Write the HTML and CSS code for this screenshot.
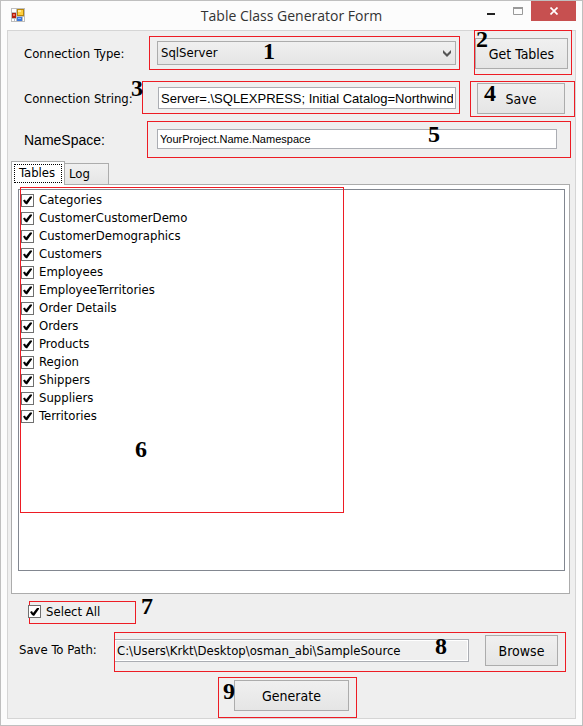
FILE: index.html
```html
<!DOCTYPE html>
<html lang="en">
<head>
<meta charset="utf-8">
<title>Table Class Generator Form</title>
<link rel="stylesheet" href="styles.css">
</head>
<body>
<div class="window">
  <header class="titlebar">
    <svg class="app-icon" width="14" height="14" viewBox="0 0 14 14" aria-hidden="true">
      <rect width="14" height="14" fill="#bdbdbd"/>
      <rect x="1" y="1" width="4" height="3" fill="#fff"/>
      <rect x="1" y="5" width="4" height="5" fill="#b3200f"/>
      <rect x="2" y="6" width="2" height="2" fill="#f0705c"/>
      <rect x="6" y="1" width="7" height="7" fill="#b8860b"/>
      <rect x="7" y="2" width="5" height="5" fill="#ffcf3f"/>
      <rect x="7" y="2" width="3" height="2" fill="#ffe99a"/>
      <rect x="6" y="9" width="5" height="4" fill="#3c78dc"/>
      <rect x="7" y="10" width="3" height="1" fill="#8db8ff"/>
      <rect x="1" y="11" width="2" height="2" fill="#fff"/>
      <rect x="4" y="11" width="1" height="2" fill="#fff"/>
      <rect x="12" y="9" width="1" height="4" fill="#fff"/>
    </svg>
    <h1 class="title">Table Class Generator Form</h1>
    <div class="window-buttons">
      <button class="caption" type="button" aria-label="Minimize">
        <svg width="8" height="10" viewBox="0 0 8 10"><rect y="7" width="8" height="2" fill="#222"/></svg>
      </button>
      <button class="caption" type="button" aria-label="Maximize">
        <svg width="10" height="8" viewBox="0 0 10 8"><path d="M0.5 1V7.5H9.5V1" fill="none" stroke="#999"/><rect width="10" height="2" fill="#999"/></svg>
      </button>
      <button class="caption close" type="button" aria-label="Close">
        <svg width="8" height="8" viewBox="0 0 8 8"><path d="M0.5 0.5L7.5 7.5M7.5 0.5L0.5 7.5" stroke="#fff" stroke-width="1.7"/></svg>
      </button>
    </div>
  </header>

  <main class="client">
    <div class="row row-type">
      <label for="type">Connection Type:</label>
      <div class="mark mark-type">
        <select id="type" class="select"><option>SqlServer</option></select>
        <svg class="chevron" width="8" height="7" viewBox="0 0 8 7" aria-hidden="true"><path d="M0 0L4 4L8 0V3L4 7L0 3Z" fill="#555"/></svg>
        <span class="num num-1">1</span>
      </div>
      <div class="mark mark-get">
        <button class="btn" type="button">Get Tables</button>
        <span class="num num-2">2</span>
      </div>
    </div>

    <div class="row row-string">
      <label for="conn">Connection String:</label>
      <div class="mark mark-string">
        <input id="conn" class="text text-large" type="text" value="Server=.\SQLEXPRESS; Initial Catalog=Northwind">
        <span class="num num-3">3</span>
      </div>
      <div class="mark mark-save">
        <button class="btn" type="button">Save</button>
        <span class="num num-4">4</span>
      </div>
    </div>

    <div class="row row-namespace">
      <label class="label-arial" for="ns">NameSpace:</label>
      <div class="mark mark-namespace">
        <input id="ns" class="text" type="text" value="YourProject.Name.Namespace">
        <span class="num num-5">5</span>
      </div>
    </div>

    <section class="tabs">
      <div class="tablist" role="tablist">
        <button class="tab active" type="button" role="tab" aria-selected="true">Tables</button>
        <button class="tab" type="button" role="tab" aria-selected="false">Log</button>
      </div>
      <div class="panel" role="tabpanel">
        <div class="list">
          <label class="item"><input class="check" type="checkbox" checked>Categories</label>
          <label class="item"><input class="check" type="checkbox" checked>CustomerCustomerDemo</label>
          <label class="item"><input class="check" type="checkbox" checked>CustomerDemographics</label>
          <label class="item"><input class="check" type="checkbox" checked>Customers</label>
          <label class="item"><input class="check" type="checkbox" checked>Employees</label>
          <label class="item"><input class="check" type="checkbox" checked>EmployeeTerritories</label>
          <label class="item"><input class="check" type="checkbox" checked>Order Details</label>
          <label class="item"><input class="check" type="checkbox" checked>Orders</label>
          <label class="item"><input class="check" type="checkbox" checked>Products</label>
          <label class="item"><input class="check" type="checkbox" checked>Region</label>
          <label class="item"><input class="check" type="checkbox" checked>Shippers</label>
          <label class="item"><input class="check" type="checkbox" checked>Suppliers</label>
          <label class="item"><input class="check" type="checkbox" checked>Territories</label>
          <div class="list-mark"><span class="num num-6">6</span></div>
        </div>
      </div>
    </section>

    <div class="mark mark-all">
      <label class="select-all"><input class="check" type="checkbox" checked>Select All</label>
      <span class="num num-7">7</span>
    </div>

    <div class="row row-path">
      <label for="path">Save To Path:</label>
      <div class="mark mark-path">
        <input id="path" class="text path" type="text" readonly value="C:\Users\Krkt\Desktop\osman_abi\SampleSource">
        <button class="btn btn-browse" type="button">Browse</button>
        <span class="num num-8">8</span>
      </div>
    </div>

    <div class="mark mark-generate">
      <button class="btn" type="button">Generate</button>
      <span class="num num-9">9</span>
    </div>
  </main>
</div>
</body>
</html>
```
FILE: styles.css
```css
* { box-sizing: border-box; }

body {
  margin: 0;
  color: #000;
  font: 13px/18px "DejaVu Sans Condensed", "DejaVu Sans", sans-serif;
}

button, input, select { margin: 0; color: inherit; font: inherit; }

.window {
  min-height: 100vh;
  padding: 0 6px 6px;
  border: 1px solid #bfbfbf;
  background: #fcfcfc;
}

/* Title bar */
.titlebar {
  display: grid;
  grid-template-columns: 1fr auto 1fr;
  align-items: start;
  height: 29px;
}
.app-icon { margin: 7px 0 0 4px; }
.title {
  margin: 4px 0 0;
  color: #333;
  font: 14px/22px "Open Sans", sans-serif;
}
.window-buttons { display: flex; justify-content: flex-end; }
.caption {
  display: flex;
  align-items: center;
  justify-content: center;
  width: 27px;
  height: 20px;
  padding: 0;
  border: 0;
  background: none;
}
.close { width: 45px; background: #c75050; }

/* Form area */
.client {
  border: 1px solid #d5d5d5;
  background: #efefef;
}
.row { display: grid; align-items: start; }
.row > label { padding-left: 16px; }

.mark { position: relative; border: 1px solid #ed1c24; }

.num {
  position: absolute;
  font: bold 24px/24px "Liberation Serif", serif;
  pointer-events: none;
}

.btn {
  width: 100%;
  height: 31px;
  padding: 0;
  border: 1px solid #acacac;
  background: linear-gradient(#f0f0f0, #e5e5e5);
  font-size: 14px;
}

.select, .text {
  display: block;
  width: 100%;
  border: 1px solid #abadb3;
  border-radius: 0;
  background: #fff;
}
.select {
  height: 24px;
  padding: 0 3px;
  border-color: #acacac;
  background: linear-gradient(#f0f0f0, #e5e5e5);
  appearance: none;
}
.chevron { position: absolute; right: 8px; top: 13px; }
.text {
  height: 20px;
  padding: 0 2px;
  font: 11px/18px "Liberation Sans", sans-serif;
}
.text-large { height: 22px; font-size: 13px; }

.row-type {
  grid-template-columns: 141px 1fr 98px;
  margin-top: -1px;
  padding-right: 3px;
}
.row-type > label { padding-top: 15px; }
.mark-type { margin: 6px 14px 0 0; padding: 4px 3px 4px 7px; }
.mark-get { padding: 7px 3px 5px 0; }

.row-string { grid-template-columns: 134px 1fr 105px; margin-top: 6px; }
.row-string > label { padding-top: 9px; }
.mark-string { margin-right: 10px; padding: 5px 3px 4px 15px; }
.mark-save { padding: 1px 9px 2px 6px; }

.row-namespace {
  grid-template-columns: 139px 1fr;
  margin-top: 4px;
  padding-right: 4px;
}
.row-namespace > label { padding-top: 10px; }
.label-arial { font: 14px/18px "Liberation Sans", sans-serif; }
.mark-namespace { padding: 7px 13px 8px 9px; }

/* Tabs */
.tabs { margin: 3px 5px 0 3px; }
.tablist { display: flex; align-items: flex-end; }
.tab {
  width: 44px;
  height: 21px;
  padding: 0 4px;
  border: 1px solid #acacac;
  border-width: 1px 1px 0 0;
  background: linear-gradient(#f0f0f0, #e5e5e5);
  text-align: left;
}
.tab.active {
  position: relative;
  width: 54px;
  height: 24px;
  margin-bottom: -1px;
  padding: 0 0 2px 7px;
  border-left-width: 1px;
  background: #fff;
}
.tab.active::after {
  content: "";
  position: absolute;
  inset: 2px;
  border: 1px dotted #000;
}
.panel { padding: 4px 4px 22px 6px; border: 1px solid #acacac; background: #fff; }

.list {
  position: relative;
  min-height: 382px;
  padding: 1px 2px;
  border: 1px solid #828790;
}
.item, .select-all { display: flex; align-items: center; gap: 5px; }
.item { height: 18px; }
.check {
  flex: none;
  width: 13px;
  height: 13px;
  border: 1px solid #707070;
  background: #fff;
  appearance: none;
}
.check:checked::before {
  content: "";
  display: block;
  width: 11px;
  height: 11px;
  background: #000;
  clip-path: polygon(1px 6px, 3px 5px, 4px 7px, 8px 2px, 10px 2px, 10px 3px, 5px 10px, 3px 9px);
}
.list-mark {
  position: absolute;
  left: 1px;
  top: -3px;
  width: 324px;
  height: 326px;
  border: 1px solid #ed1c24;
  pointer-events: none;
}

/* Bottom controls */
.mark-all { width: 107px; height: 23px; margin: 7px 0 0 21px; }
.select-all { height: 19px; margin-left: -2px; }

.row-path {
  grid-template-columns: 106px 1fr;
  margin-top: 8px;
  padding-right: 9px;
}
.row-path > label { padding: 9px 0 0 11px; }
.mark-path {
  display: flex;
  align-items: flex-start;
  gap: 16px;
  padding: 2px 7px 5px 0;
}
.path {
  flex: 1;
  width: auto;
  min-width: 0;
  height: 23px;
  margin-top: 4px;
  border-left: 0;
  background: #efefef;
  box-shadow: inset 0 0 0 1px #fff;
  font: inherit;
}
.btn-browse { flex: none; width: 73px; }

.mark-generate {
  width: 139px;
  height: 41px;
  margin: 5px 0 0 210px;
  padding: 2px 7px 0 15px;
}

/* Callout numbers */
.num-1 { left: 113px; top: 2px; }
.num-2 { left: 1px; top: -4px; }
.num-3 { left: -12px; top: -6px; }
.num-4 { left: 13px; top: -1px; }
.num-5 { left: 280px; top: 0; }
.num-6 { left: 114px; top: 249px; }
.num-7 { left: 111px; top: -8px; }
.num-8 { left: 320px; top: 1px; }
.num-9 { left: 4px; top: 1px; }
```
